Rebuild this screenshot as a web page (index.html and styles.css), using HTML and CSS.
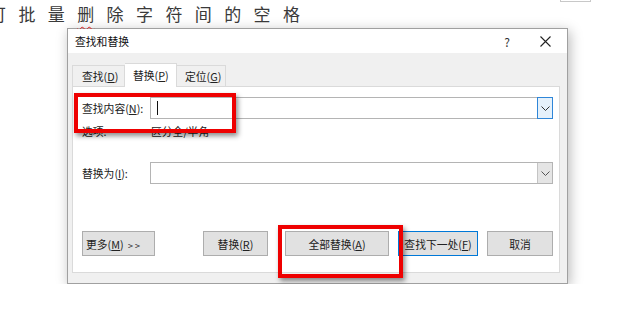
FILE: index.html
```html
<!DOCTYPE html>
<html lang="zh-CN">
<head>
    <meta charset="UTF-8">
    <title>查找和替换</title>
    <link rel="stylesheet" href="styles.css">
</head>
<body>
    <div class="corner-box"></div>
    <p class="doc-line">可批量<span class="typo">删</span>除字符间的空格</p>

    <div class="dialog">
        <div class="titlebar">
            <span class="title">查找和替换</span>
            <span class="help">?</span>
            <svg class="close" width="11" height="11" viewBox="0 0 11 11">
                <path d="M0.5 0.5 L10.5 10.5 M10.5 0.5 L0.5 10.5" stroke="#222" stroke-width="1.1" fill="none"/>
            </svg>
        </div>

        <div class="tabs">
            <div class="tab">查找(<u>D</u>)</div>
            <div class="tab active">替换(<u>P</u>)</div>
            <div class="tab">定位(<u>G</u>)</div>
        </div>

        <div class="panel">
            <div class="field-row first">
                <label>查找内容(<u>N</u>):</label>
                <div class="combo">
                    <span class="caret"></span>
                    <span class="drop focused">
                        <svg width="9" height="5" viewBox="0 0 9 5"><polyline points="0.5,0.5 4.5,4.5 8.5,0.5" stroke="#333" fill="none"/></svg>
                    </span>
                </div>
            </div>
            <div class="options">
                <span class="opt-label">选项:</span>
                <span>区分全/半角</span>
            </div>
            <div class="field-row second">
                <label>替换为(<u>I</u>):</label>
                <div class="combo">
                    <span class="drop">
                        <svg width="9" height="5" viewBox="0 0 9 5"><polyline points="0.5,0.5 4.5,4.5 8.5,0.5" stroke="#555" fill="none"/></svg>
                    </span>
                </div>
            </div>

            <div class="buttons">
                <button class="btn more">更多(<u>M</u>) <span class="arrows">&gt; &gt;</span></button>
                <button class="btn replace">替换(<u>R</u>)</button>
                <button class="btn replace-all">全部替换(<u>A</u>)</button>
                <button class="btn find-next">查找下一处(<u>F</u>)</button>
                <button class="btn cancel">取消</button>
            </div>

            <div class="mark mark-find"></div>
            <div class="mark mark-all"></div>
        </div>
    </div>
</body>
</html>
```

FILE: styles.css
```css
* {
    margin: 0;
    padding: 0;
    box-sizing: border-box;
}
body {
    background: #fff;
    font-family: "Noto Sans CJK SC", "Noto Sans", sans-serif;
    color: #222;
    position: relative;
    overflow: hidden;
}
.corner-box {
    position: absolute;
    left: 560px;
    top: -2px;
    width: 31px;
    height: 4px;
    border: 1px solid #c8c8c8;
}
.doc-line {
    height: 28px;
    line-height: 28px;
    font-size: 17px;
    letter-spacing: 12.4px;
    color: #3a3a3a;
    margin-left: -11px;
    white-space: nowrap;
}
.typo {
    letter-spacing: 0;
    margin-right: 12.4px;
    text-decoration: underline wavy #e02020;
    text-decoration-thickness: 1px;
    text-underline-offset: 5px;
}
.dialog {
    width: 501px;
    height: 256px;
    margin-left: 67px;
    border: 1px solid #a0a0a0;
    background: #f0f0f0;
    box-shadow: 2px 3px 12px rgba(0, 0, 0, 0.28);
    font-size: 10.8px;
    display: flex;
    flex-direction: column;
}
.titlebar {
    height: 24px;
    background: #fff;
    display: flex;
    align-items: center;
    padding-left: 7px;
}
.title {
    flex: 1;
    color: #111;
}
.help {
    font-size: 12px;
    color: #333;
    margin-right: 30px;
}
.close {
    margin-right: 16px;
}
.tabs {
    display: flex;
    align-items: flex-end;
    margin-top: 9px;
    padding-left: 4px;
    height: 24px;
}
.tab {
    height: 21px;
    line-height: 20px;
    border: 1px solid #dadada;
    border-bottom: none;
    background: #f0f0f0;
    color: #222;
    white-space: nowrap;
    padding-left: 9px;
}
.tab:first-child {
    width: 53px;
}
.tab:last-child {
    width: 49px;
    border-left: none;
    padding-left: 8px;
}
.tab.active {
    height: 24px;
    width: 52px;
    background: #fff;
    border-left: none;
    padding-left: 8px;
    line-height: 22px;
    position: relative;
    z-index: 1;
    margin-bottom: -1px;
}
.panel {
    position: relative;
    height: 187px;
    margin: 0 7px 0 4px;
    background: #fff;
    border: 1px solid #dadada;
}
.field-row {
    display: flex;
    align-items: center;
    padding-left: 9px;
}
.field-row.first {
    margin-top: 10px;
}
.field-row.second {
    margin-top: 21px;
}
.field-row label {
    width: 68px;
    color: #222;
    white-space: nowrap;
}
.combo {
    width: 403px;
    height: 22px;
    border: 1px solid #b4b4b4;
    background: #fff;
    display: flex;
    align-items: center;
    justify-content: space-between;
}
.caret {
    width: 1px;
    height: 14px;
    background: #111;
    margin-left: 6px;
}
.drop {
    width: 15px;
    height: 20px;
    margin-left: auto;
    background: #e5e5e5;
    border-left: 1px solid #c4c4c4;
    display: flex;
    align-items: center;
    justify-content: center;
}
.drop.focused {
    height: 22px;
    width: 16px;
    margin-right: -1px;
    background: #e5f1fb;
    border: 1px solid #2f86d8;
}
.options {
    display: flex;
    padding-left: 9px;
    margin-top: 2px;
    height: 20px;
    align-items: center;
    color: #222;
}
.opt-label {
    width: 69px;
}
.buttons {
    display: flex;
    padding-left: 9px;
    margin-top: 47px;
}
.btn {
    height: 25px;
    background: #e1e1e1;
    border: 1px solid #adadad;
    font-family: inherit;
    font-size: 10.8px;
    color: #222;
    white-space: nowrap;
}
.btn.more {
    width: 73px;
    text-align: left;
    padding-left: 3px;
}
.arrows {
    font-size: 9px;
    margin-left: 2px;
}
.btn.replace {
    width: 65px;
    margin-left: 48px;
}
.btn.replace-all {
    width: 104px;
    margin-left: 17px;
}
.btn.find-next {
    width: 80px;
    margin-left: 9px;
    border-color: #0078d7;
}
.btn.cancel {
    width: 66px;
    margin-left: 9px;
}
.mark {
    position: absolute;
    border: 4px solid #ee0000;
    box-shadow: 2px 3px 5px rgba(0, 0, 0, 0.45);
    z-index: 2;
}
.mark-find {
    left: 1px;
    top: 6px;
    width: 162px;
    height: 40px;
}
.mark-all {
    left: 205px;
    top: 138px;
    width: 125px;
    height: 53px;
}
```
